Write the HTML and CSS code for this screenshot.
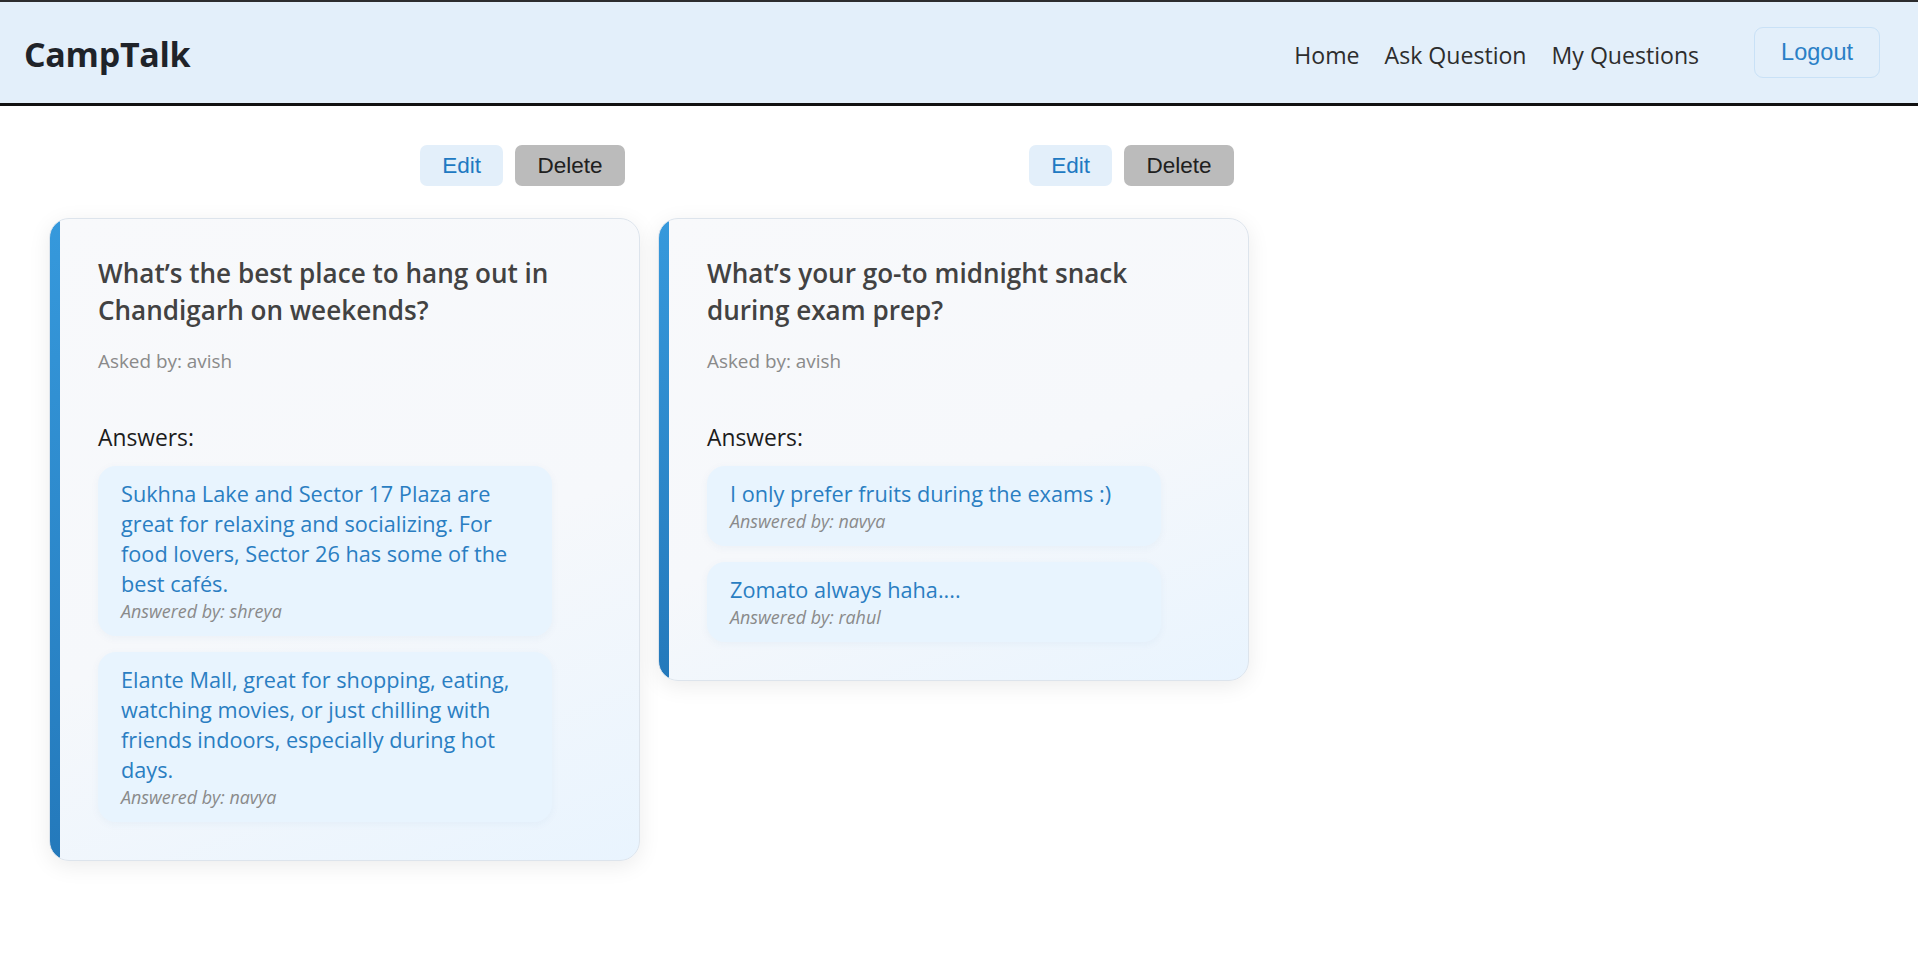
FILE: index.html
```html
<!DOCTYPE html>
<html lang="en">
<head>
<meta charset="utf-8">
<title>CampTalk - My Questions</title>
<link rel="stylesheet" href="styles.css">
</head>
<body>
<header class="topbar">
  <div class="logo">CampTalk</div>
  <nav class="nav">
    <a class="nav-link" href="#">Home</a>
    <a class="nav-link" href="#">Ask Question</a>
    <a class="nav-link" href="#">My Questions</a>
    <button class="logout" type="button">Logout</button>
  </nav>
</header>
<main class="main">
  <div class="grid">
    <section class="item">
      <div class="actions">
        <button class="btn btn-edit" type="button">Edit</button>
        <button class="btn btn-delete" type="button">Delete</button>
      </div>
      <article class="card">
        <h2 class="q-title">What’s the best place to hang out in Chandigarh on weekends?</h2>
        <p class="asked">Asked by: avish</p>
        <h3 class="answers-label">Answers:</h3>
        <div class="answer">
          <p class="answer-text">Sukhna Lake and Sector 17 Plaza are great for relaxing and socializing. For food lovers, Sector 26 has some of the best cafés.</p>
          <p class="answered-by">Answered by: shreya</p>
        </div>
        <div class="answer">
          <p class="answer-text">Elante Mall, great for shopping, eating, watching movies, or just chilling with friends indoors, especially during hot days.</p>
          <p class="answered-by">Answered by: navya</p>
        </div>
      </article>
    </section>
    <section class="item">
      <div class="actions">
        <button class="btn btn-edit" type="button">Edit</button>
        <button class="btn btn-delete" type="button">Delete</button>
      </div>
      <article class="card">
        <h2 class="q-title">What’s your go-to midnight snack during exam prep?</h2>
        <p class="asked">Asked by: avish</p>
        <h3 class="answers-label">Answers:</h3>
        <div class="answer">
          <p class="answer-text">I only prefer fruits during the exams :)</p>
          <p class="answered-by">Answered by: navya</p>
        </div>
        <div class="answer">
          <p class="answer-text">Zomato always haha....</p>
          <p class="answered-by">Answered by: rahul</p>
        </div>
      </article>
    </section>
  </div>
</main>
</body>
</html>
```
FILE: styles.css
```css
html::-webkit-scrollbar {
  width: 13px;
  background: #e8f4fe;
}
html::-webkit-scrollbar-thumb {
  background: #c2c2c6;
  border-radius: 7px;
}

body {
  margin: 0;
  font-family: "Open Sans", "Noto Sans", sans-serif;
  background: #ffffff;
  color: #222;
}

.topbar {
  box-sizing: border-box;
  height: 106px;
  display: flex;
  align-items: center;
  justify-content: space-between;
  padding: 0 38px 0 24px;
  background: #e3effa;
  border-top: 2px solid #2c2c2e;
  border-bottom: 3px solid #111111;
}

.logo {
  font-size: 34px;
  font-weight: 700;
  color: #1f2329;
  letter-spacing: -0.3px;
  margin-top: 2px;
}

.nav {
  display: flex;
  align-items: center;
  gap: 25px;
}

.nav-link {
  font-size: 23.1px;
  color: #2d2d2d;
  text-decoration: none;
  margin-top: 4px;
}

.logout {
  margin-left: 30px;
  height: 51px;
  padding: 0 26px;
  font-family: "Liberation Sans", Arial, sans-serif;
  font-size: 23.5px;
  color: #2a7fc6;
  background: #e3effa;
  border: 1px solid #c9e1f6;
  border-radius: 9px;
}

.main {
  box-sizing: border-box;
  min-height: 100vh;
  padding: 39px 0 0 49px;
}

.grid {
  display: grid;
  grid-template-columns: repeat(3, 591px);
  column-gap: 18px;
  align-items: start;
}

.item {
  display: flex;
  flex-direction: column;
}

.actions {
  display: flex;
  justify-content: flex-end;
  gap: 12px;
  padding-right: 15px;
  margin-bottom: 32px;
}

.btn {
  height: 41px;
  padding: 0 22.5px;
  font-family: "Liberation Sans", Arial, sans-serif;
  font-size: 22.5px;
  border: none;
  border-radius: 7px;
}

.btn-edit {
  background: #e3effa;
  color: #2079c2;
  padding: 0 22px;
}

.btn-delete {
  background: #bbbbbb;
  color: #202020;
}

.card {
  border: 1px solid #dde4ec;
  border-radius: 20px;
  padding: 36px 46px 38px 48px;
  background:
    linear-gradient(to bottom, #3699dc, #2479bb) left top / 10px 100% no-repeat,
    linear-gradient(160deg, #f8f9fb 0%, #f6f8fb 55%, #e9f4fe 100%);
  box-shadow: 0 5px 22px rgba(0, 0, 0, 0.08);
}

.q-title {
  margin: 0;
  font-size: 26.1px;
  font-weight: 600;
  line-height: 37px;
  color: #424242;
}

.asked {
  margin: 19px 0 0;
  font-size: 18.9px;
  line-height: 27px;
  color: #8a8a8a;
}

.answers-label {
  margin: 48px 0 0;
  font-size: 22.8px;
  font-weight: 400;
  line-height: 30px;
  color: #1c1c1c;
}

.answer {
  box-sizing: border-box;
  width: 454px;
  margin-top: 13px;
  padding: 13px 20px 13px 23px;
  background: #e8f4fe;
  border-radius: 18px;
  box-shadow: 0 2px 8px rgba(40, 100, 160, 0.05);
}

.answer + .answer {
  margin-top: 16px;
}

.answer-text {
  margin: 0;
  font-size: 21.7px;
  line-height: 30px;
  color: #2a7ec2;
}

.answered-by {
  margin: 0;
  font-size: 17.9px;
  font-style: italic;
  line-height: 24px;
  color: #8a8a8a;
}
```
